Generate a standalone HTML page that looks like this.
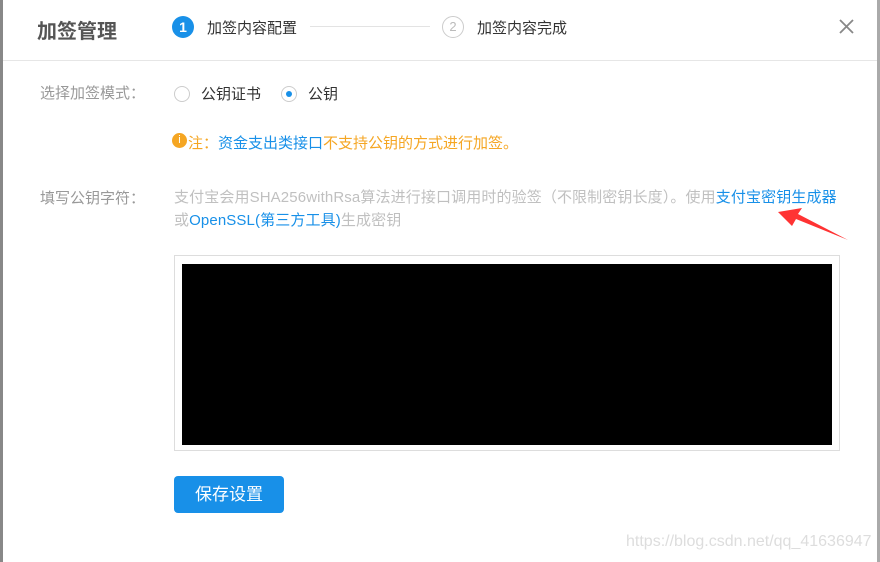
<!DOCTYPE html><html><head><meta charset="utf-8"><style>
body{margin:0;width:880px;height:562px;background:#fff;position:relative;overflow:hidden;font-family:"Liberation Sans","Noto Sans CJK SC",sans-serif;}
.a{position:absolute;white-space:nowrap}
</style></head><body>
<div class="a" style="left:0;top:0;width:3px;height:562px;background:#888"></div>
<div class="a" style="left:877px;top:0;width:3px;height:562px;background:#aaa"></div>
<div class="a" style="left:37px;top:15px;font-size:20px;font-weight:bold;color:#555">加签管理</div>
<div class="a" style="left:172px;top:16px;width:22px;height:22px;border-radius:50%;background:#1890e8;color:#fff;font-size:14px;font-weight:bold;text-align:center;line-height:22px">1</div>
<div class="a" style="left:207px;top:17px;font-size:15px;color:#333">加签内容配置</div>
<div class="a" style="left:310px;top:26px;width:120px;height:1px;background:#e3e3e3"></div>
<div class="a" style="left:442px;top:16px;width:20px;height:20px;border-radius:50%;border:1px solid #ccc;color:#bbb;font-size:13px;text-align:center;line-height:20px">2</div>
<div class="a" style="left:477px;top:17px;font-size:15px;color:#333">加签内容完成</div>
<svg class="a" style="left:838px;top:18px" width="17" height="17"><path d="M2 2L15 15M15 2L2 15" stroke="#888" stroke-width="1.8"/></svg>
<div class="a" style="left:3px;top:60px;width:874px;height:1px;background:#e6e6e6"></div>
<div class="a" style="left:40px;top:82px;font-size:15px;color:#999">选择加签模式：</div>
<div class="a" style="left:174px;top:86px;width:14px;height:14px;border-radius:50%;border:1px solid #ccc"></div>
<div class="a" style="left:201px;top:83px;font-size:15px;color:#333">公钥证书</div>
<div class="a" style="left:281px;top:86px;width:14px;height:14px;border-radius:50%;border:1px solid #ccc"></div>
<div class="a" style="left:286px;top:91px;width:6px;height:6px;border-radius:50%;background:#1890e8"></div>
<div class="a" style="left:308px;top:83px;font-size:15px;color:#333">公钥</div>
<div class="a" style="left:172px;top:133px;width:15px;height:15px;border-radius:50%;background:#f5a623;color:#fff;font-size:11px;text-align:center;line-height:15px">i</div>
<div class="a" style="left:188px;top:132px;font-size:15px;color:#f5a623">注：<span style="color:#1890e8">资金支出类接口</span>不支持公钥的方式进行加签。</div>
<div class="a" style="left:40px;top:187px;font-size:15px;color:#999">填写公钥字符：</div>
<div class="a" style="left:174px;top:186px;font-size:15px;color:#c0c0c0;line-height:23px;letter-spacing:0.12px">支付宝会用SHA256withRsa算法进行接口调用时的验签（不限制密钥长度）。使用<span style="color:#1890e8">支付宝密钥生成器</span><br>或<span style="color:#1890e8">OpenSSL(第三方工具)</span>生成密钥</div>
<svg class="a" style="left:770px;top:200px" width="80" height="42"><polygon points="8,12 32,8 28,14 78,40 26,19 22,26" fill="#f33"/></svg>
<div class="a" style="left:174px;top:255px;width:664px;height:194px;border:1px solid #ddd"></div>
<div class="a" style="left:182px;top:264px;width:650px;height:181px;background:#000"></div>
<div class="a" style="left:174px;top:476px;width:110px;height:37px;border-radius:4px;background:#1890e8;color:#fff;font-size:17px;text-align:center;line-height:37px">保存设置</div>
<div class="a" style="left:626px;top:533px;font-size:16px;color:#ddd">https://blog.csdn.net/qq_41636947</div>
</body></html>
